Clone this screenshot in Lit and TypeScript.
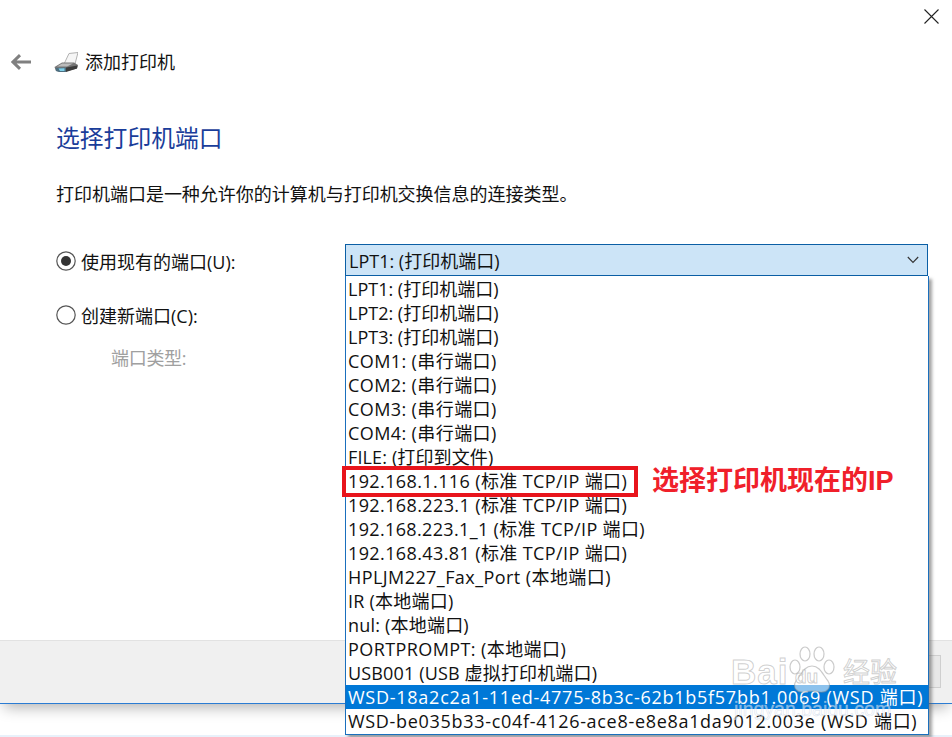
import { LitElement, html, css, svg } from "lit";
import { customElement } from "lit/decorators.js";

const PORTS: [string, number][] = [
  ["LPT1: (打印机端口)", 0], ["LPT2: (打印机端口)", 0], ["LPT3: (打印机端口)", 0],
  ["COM1: (串行端口)", 0.4], ["COM2: (串行端口)", 0.4], ["COM3: (串行端口)", 0.4], ["COM4: (串行端口)", 0.4],
  ["FILE: (打印到文件)", 0.13],
  ["192.168.1.116 (标准 TCP/IP 端口)", 0.39], ["192.168.223.1 (标准 TCP/IP 端口)", 0.39],
  ["192.168.223.1_1 (标准 TCP/IP 端口)", 0.35], ["192.168.43.81 (标准 TCP/IP 端口)", 0.39],
  ["HPLJM227_Fax_Port (本地端口)", 0.43], ["IR (本地端口)", 0.25], ["nul: (本地端口)", 0.2],
  ["PORTPROMPT: (本地端口)", 0.41], ["USB001 (USB 虚拟打印机端口)", 0.15],
  ["WSD-18a2c2a1-11ed-4775-8b3c-62b1b5f57bb1.0069 (WSD 端口)", 0.74],
  ["WSD-be035b33-c04f-4126-ace8-e8e8a1da9012.003e (WSD 端口)", 0.69],
];

const printerIcon = svg`
  <path d="M10 12 L15 1.5 L24 0.5 L21 12 Z" fill="#f6f6f6" stroke="#a0a0a0" stroke-width="0.8"/>
  <path d="M0.5 15 L8 10.5 L20 10.5 L24 13 L23 16.5 L10 20 L2 19 Z" fill="#777"/>
  <path d="M3 14.5 L8 11.5 L19 11.5 L13 14.5 Z" fill="#bcbcbc"/>
  <path d="M1.5 16 L12 15.5 L12 20 L5 20 L2 19 Z" fill="#4e6f80"/>
  <path d="M4.5 16.5 L10.5 16.3 L10.5 19 L6 19 Z" fill="#7fd0ea"/>
  <path d="M12 15.5 L23.5 13.5 L23 16.5 L12 20 Z" fill="#3c3c3c"/>
`;

@customElement("app-root")
export class AppRoot extends LitElement {
  static styles = css`
    :host {
      display: block;
      position: relative;
      width: 952px;
      height: 737px;
      overflow: hidden;
      background: #fff;
      font-family: "Open Sans", "Noto Sans CJK SC", sans-serif;
      font-size: 18px;
      color: #111;
    }
    .dialog {
      height: 704px;
      display: flex;
      flex-direction: column;
      box-shadow: 0 7px 14px -4px rgba(0, 0, 0, 0.32);
      background: #fff;
      position: relative;
    }
    .topbar {
      height: 32px;
      display: flex;
      justify-content: flex-end;
      align-items: flex-start;
      padding: 9px 13px 0 0;
      box-sizing: border-box;
    }
    .nav {
      height: 60px;
      display: flex;
      align-items: center;
      padding-left: 11px;
    }
    .back { margin-right: 23px; }
    .printer { margin-right: 7px; }
    .navtitle { line-height: 24px; }
    .main { flex: 1; padding: 0 0 0 56px; }
    h1 {
      margin: 30px 0 0;
      font-size: 23.8px;
      line-height: 32px;
      font-weight: 400;
      color: #1a3d9a;
    }
    .desc { margin: 27px 0 0; line-height: 26px; letter-spacing: -0.02px; }
    .form {
      margin-top: 37px;
      display: grid;
      grid-template-columns: 289px 583px;
      grid-template-rows: 32px 22px 32px 14px 26px;
    }
    .radio { display: flex; align-items: center; gap: 5px; padding-top: 2px; }
    .combo {
      box-sizing: border-box;
      height: 33px;
      background: #cce4f7;
      border: 1px solid #0b5fa5;
      border-bottom-width: 2px;
      display: flex;
      align-items: center;
      justify-content: space-between;
      padding: 0 8px 0 3px;
    }
    .r1 { grid-row: 1; }
    .r3 { grid-row: 3; grid-column: 1; }
    .r5 { grid-row: 5; grid-column: 1; padding: 1px 0 0 55px; color: #a0a0a0; line-height: 26px; letter-spacing: -0.3px; }
    .footer {
      box-sizing: border-box;
      height: 64px;
      background: #f0f0f0;
      border-top: 1px solid #e2e2e2;
      border-bottom: 1px solid #2b7cd3;
      display: flex;
      justify-content: flex-end;
      align-items: flex-start;
      padding: 14px 11px 0 0;
    }
    .btn { width: 90px; height: 33px; box-sizing: border-box; background: #e8e8e8; border: 1px solid #cfcfcf; }
    .strip { position: absolute; left: 0; right: 0; bottom: 0; height: 2px; background: #e8f1fa; }
    .list {
      position: absolute;
      left: 345px;
      top: 276px;
      width: 584px;
      box-sizing: border-box;
      background: #fff;
      border: 1px solid #1a6fbd;
      border-top: none;
      padding: 1px 0 1px;
      box-shadow: 3px 3px 3px rgba(90, 90, 90, 0.55);
    }
    .row { height: 24px; line-height: 24px; padding-left: 2px; white-space: nowrap; }
    .row.sel { background: #0078d7; color: #fff; }
    .mark {
      position: absolute;
      left: 342px;
      top: 466px;
      width: 296px;
      height: 31px;
      box-sizing: border-box;
      border: 4px solid #e8141c;
    }
    .callout {
      position: absolute;
      left: 652px;
      top: 464px;
      line-height: 34px;
      font-size: 27px;
      font-weight: 700;
      color: #f0202a;
      font-family: "Liberation Sans", "Noto Sans CJK SC", sans-serif;
      white-space: nowrap;
    }
    .wm { position: absolute; left: 725px; top: 640px; width: 200px; height: 80px; pointer-events: none; }
    .wm span {
      position: absolute;
      font-family: "Liberation Sans", "Noto Sans CJK SC", sans-serif;
      color: rgba(255, 255, 255, 0.6);
      -webkit-text-stroke: 1px rgba(150, 150, 150, 0.45);
      white-space: nowrap;
    }
    .wm .bai { left: 6px; top: 14px; font-size: 35px; line-height: 36px; font-weight: 700; letter-spacing: 1px; }
    .wm .du { left: 70px; top: 27px; font-size: 19px; line-height: 20px; font-weight: 700; }
    .wm .jy { left: 118px; top: 18px; font-size: 27px; line-height: 30px; }
    .wm .url { left: 9px; top: 58px; font-size: 19.5px; line-height: 22px; color: rgba(255, 255, 255, 0.5); -webkit-text-stroke: 0.5px rgba(170, 190, 215, 0.5); }
    .wm svg { position: absolute; left: 62px; top: 3px; }
  `;

  render() {
    return html`
      <div class="dialog">
        <div class="topbar">
          <svg width="15" height="15" viewBox="0 0 15 15"><path d="M.5 .5 L14.5 14.5 M14.5 .5 L.5 14.5" stroke="#222" stroke-width="1.1" fill="none"/></svg>
        </div>
        <div class="nav">
          <svg class="back" width="20" height="16" viewBox="0 0 20 16"><path d="M9 1.2 L2 8 L9 14.8 M2 8 H20" stroke="#808080" stroke-width="3" fill="none"/></svg>
          <svg class="printer" width="24" height="20" viewBox="0 0 24 20">${printerIcon}</svg>
          <span class="navtitle">添加打印机</span>
        </div>
        <div class="main">
          <h1>选择打印机端口</h1>
          <p class="desc">打印机端口是一种允许你的计算机与打印机交换信息的连接类型。</p>
          <div class="form">
            <div class="radio r1">
              <svg width="20" height="20" viewBox="0 0 20 20"><circle cx="10" cy="10" r="9.2" fill="#fff" stroke="#555" stroke-width="1.2"/><circle cx="10" cy="10" r="5" fill="#333"/></svg>
              <span>使用现有的端口(U):</span>
            </div>
            <div class="combo r1">
              <span>LPT1: (打印机端口)</span>
              <svg width="12" height="8" viewBox="0 0 12 8"><path d="M.8 1 L6 6.5 L11.2 1" stroke="#333" stroke-width="1.1" fill="none"/></svg>
            </div>
            <div class="radio r3">
              <svg width="20" height="20" viewBox="0 0 20 20"><circle cx="10" cy="10" r="9.2" fill="#fff" stroke="#555" stroke-width="1.2"/></svg>
              <span>创建新端口(C):</span>
            </div>
            <div class="r5">端口类型:</div>
          </div>
        </div>
        <div class="footer"><div class="btn"></div></div>
      </div>
      <div class="strip"></div>
      <div class="list">
        ${PORTS.map(([p, ls], i) => html`<div class="row ${i === 17 ? "sel" : ""}" style="letter-spacing:${ls}px">${p}</div>`)}
      </div>
      <div class="mark"></div>
      <div class="callout">选择打印机现在的IP</div>
      <div class="wm">
        <svg width="50" height="56" viewBox="0 0 50 56" fill="rgba(255,255,255,.55)" stroke="rgba(150,150,150,.5)" stroke-width="1.2">
          <ellipse cx="8" cy="24" rx="5" ry="7"/>
          <ellipse cx="18" cy="11" rx="5" ry="7"/>
          <ellipse cx="32" cy="11" rx="5" ry="7"/>
          <ellipse cx="42" cy="24" rx="5" ry="7"/>
          <path d="M25 23 C33 23 36 32 41 38 C45 44 40 50 33 49 C28 48 22 48 17 49 C10 50 5 44 9 38 C14 32 17 23 25 23 Z"/>
        </svg>
        <span class="bai">Bai</span>
        <span class="du">du</span>
        <span class="jy">经验</span>
        <span class="url">jingyan.baidu.com</span>
      </div>
    `;
  }
}
